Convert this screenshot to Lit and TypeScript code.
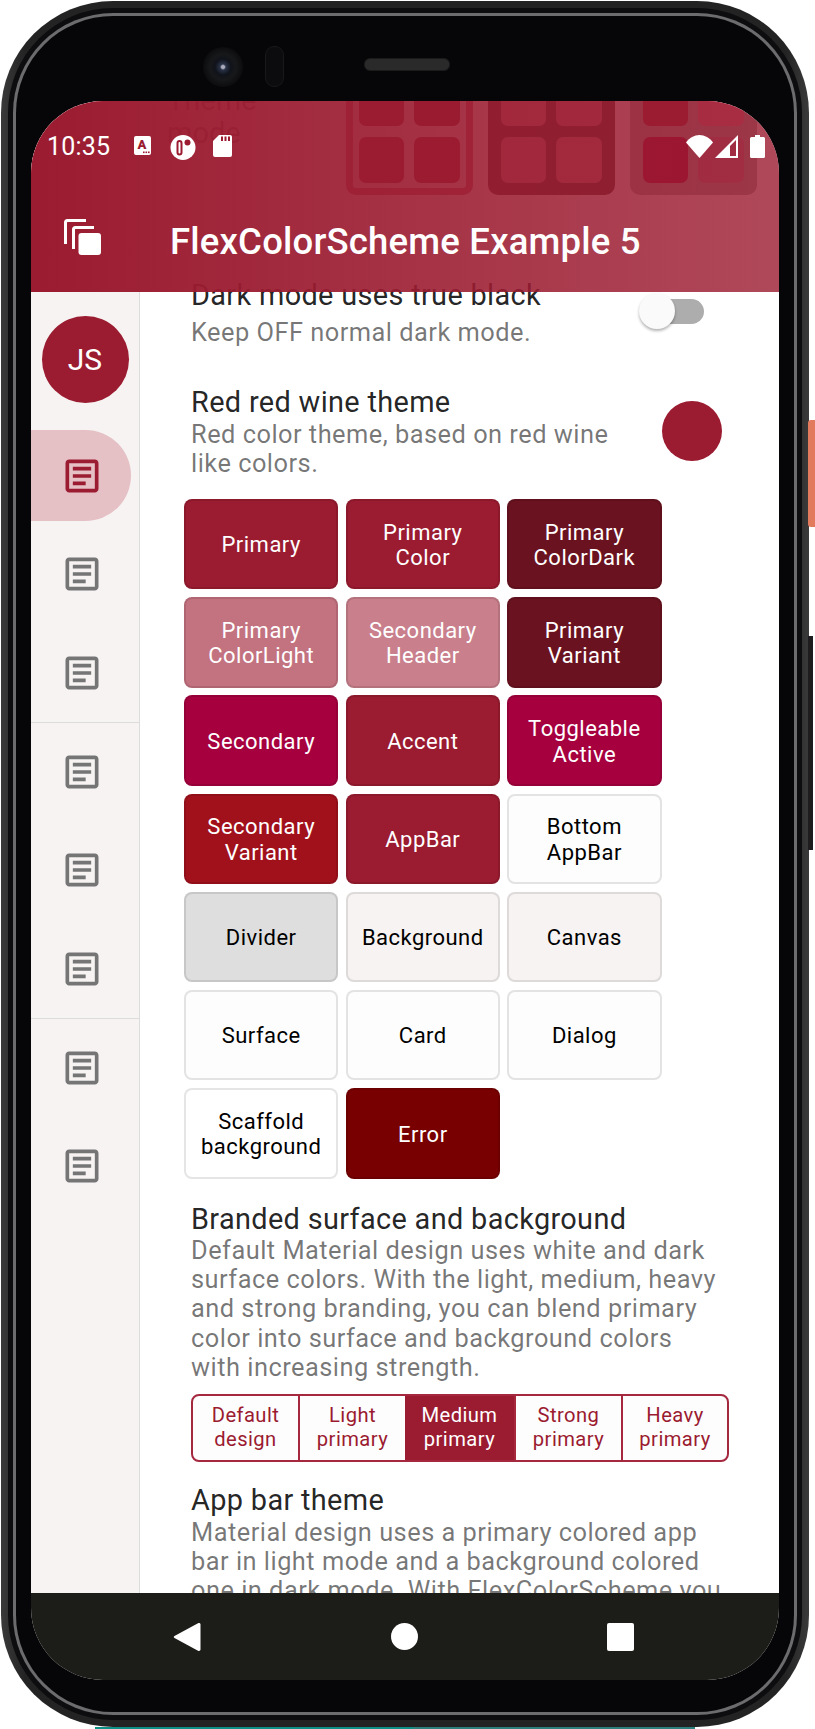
import { LitElement, html, css, svg } from "lit";
import { customElement } from "lit/decorators.js";

const PRIMARY = "#9b1b30";

const article = svg`<path d="M19 5v14H5V5h14m0-2H5c-1.1 0-2 .9-2 2v14c0 1.1.9 2 2 2h14c1.1 0 2-.9 2-2V5c0-1.1-.9-2-2-2z"/><path d="M14 17H7v-2h7v2zm3-4H7v-2h10v2zm0-4H7V7h10v2z"/>`;

type Swatch = { l: string[]; bg: string; fg: string };
const W = "#ffffff";
const K = "#000000";
const swatches: Swatch[] = [
  { l: ["Primary"], bg: PRIMARY, fg: W },
  { l: ["Primary", "Color"], bg: PRIMARY, fg: W },
  { l: ["Primary", "ColorDark"], bg: "#6b1220", fg: W },
  { l: ["Primary", "ColorLight"], bg: "#c3727f", fg: W },
  { l: ["Secondary", "Header"], bg: "#c97f8c", fg: W },
  { l: ["Primary", "Variant"], bg: "#6b1220", fg: W },
  { l: ["Secondary"], bg: "#a6003f", fg: W },
  { l: ["Accent"], bg: PRIMARY, fg: W },
  { l: ["Toggleable", "Active"], bg: "#a6003f", fg: W },
  { l: ["Secondary", "Variant"], bg: "#a1111c", fg: W },
  { l: ["AppBar"], bg: PRIMARY, fg: W },
  { l: ["Bottom", "AppBar"], bg: "#fdfdfd", fg: K },
  { l: ["Divider"], bg: "#dedede", fg: K },
  { l: ["Background"], bg: "#f6f3f2", fg: K },
  { l: ["Canvas"], bg: "#f6f3f2", fg: K },
  { l: ["Surface"], bg: "#fdfdfd", fg: K },
  { l: ["Card"], bg: "#fdfdfd", fg: K },
  { l: ["Dialog"], bg: "#fdfdfd", fg: K },
  { l: ["Scaffold", "background"], bg: "#ffffff", fg: K },
  { l: ["Error"], bg: "#790000", fg: W },
];

const segments = [
  ["Default", "design"],
  ["Light", "primary"],
  ["Medium", "primary"],
  ["Strong", "primary"],
  ["Heavy", "primary"],
];

const ghosts = [
  { cls: "g1", tiles: ["#9b1b30", "#8f1b2e", "#9b1a30", "#9f1a2e"] },
  { cls: "g2", tiles: ["#d4808f", "#c87588", "#cf808f", "#cf7a85"] },
  { cls: "g3", tiles: ["#9b1b30", "#e07b90", "#a0003c", "#bb7b90"] },
];

@customElement("app-root")
export class AppRoot extends LitElement {
  static styles = css`
    :host {
      display: block;
      position: relative;
      width: 815px;
      height: 1729px;
      overflow: hidden;
      background: #fff;
      font-family: Roboto, "Liberation Sans", sans-serif;
    }
    .shell {
      margin: 1px 0 0 1px;
      width: 808px;
      height: 1726px;
      box-sizing: border-box;
      padding: 7px;
      border-radius: 112px;
      background: linear-gradient(90deg, #3a3a3a, #232323 3%, #232323 97%, #3a3a3a);
    }
    .ring-dark {
      height: 100%;
      box-sizing: border-box;
      padding: 5px;
      border-radius: 105px;
      background: #0d0d0f;
    }
    .ring-light {
      height: 100%;
      box-sizing: border-box;
      padding: 3px;
      border-radius: 100px;
      background: #6c6c6e;
    }
    .bezel {
      height: 100%;
      box-sizing: border-box;
      padding: 85px 14px 0 15px;
      border-radius: 97px;
      background: #060608;
      position: relative;
    }
    .camera {
      position: absolute;
      left: 187px;
      top: 31px;
      width: 40px;
      height: 40px;
      border-radius: 50%;
      background: radial-gradient(circle at 50% 50%, #aab 0 1.5px, #2a3348 3px, #10131a 8px, #17181a 13px, #0c0c0e 20px);
    }
    .sensor {
      position: absolute;
      left: 249px;
      top: 30px;
      width: 17px;
      height: 39px;
      border-radius: 9px;
      background: #0c0c0e;
      border: 1px solid #17181a;
    }
    .speaker {
      position: absolute;
      left: 348px;
      top: 42px;
      width: 84px;
      height: 11px;
      border-radius: 6px;
      background: #2a2a2b;
      border: 1px solid #1a1a1b;
    }
    .teal {
      margin-left: 95px;
      width: 600px;
      height: 2px;
      background: linear-gradient(90deg, #0e8f85 0 53%, #2c7f7a 53%);
    }
    .btn-orange {
      position: absolute;
      left: 808px;
      top: 420px;
      width: 7px;
      height: 107px;
      border-radius: 3px 0 0 3px;
      background: #e27a5e;
    }
    .btn-dark {
      position: absolute;
      left: 808px;
      top: 636px;
      width: 5px;
      height: 214px;
      background: #1d1d1f;
    }

    .screen {
      position: relative;
      width: 748px;
      height: 1579px;
      overflow: hidden;
      border-radius: 72px;
      background: #fff;
    }
    .content {
      display: flex;
      height: 1492px;
      overflow: hidden;
    }

    /* rail */
    .rail {
      flex: none;
      width: 109px;
      box-sizing: border-box;
      padding-top: 215px;
      background: #f6f3f2;
      border-right: 1px solid #dcdcdc;
    }
    .avatar {
      width: 87px;
      height: 87px;
      margin: 0 auto 24px;
      border-radius: 50%;
      background: #9b1b30;
      color: #fff;
      font-size: 30px;
      display: flex;
      align-items: center;
      justify-content: center;
    }
    .dest {
      height: 98.3px;
      display: flex;
      align-items: center;
      justify-content: center;
      padding-right: 6px;
      fill: #757575;
      position: relative;
    }
    .dest svg {
      width: 44px;
      height: 44px;
      display: block;
      position: relative;
    }
    .dest.sel {
      fill: #9b1b30;
    }
    .dest.sel::before {
      content: "";
      position: absolute;
      left: 0;
      top: 3px;
      bottom: 4px;
      width: 100px;
      border-radius: 0 46px 46px 0;
      background: #e5c1c6;
    }
    .rail-div {
      height: 1px;
      background: #dcdcdc;
    }

    /* main */
    .main {
      flex: 1;
      min-width: 0;
      margin-top: -34px;
    }
    .ghost {
      display: flex;
      height: 128px;
    }
    .ghost-label {
      flex: none;
      width: 206px;
      box-sizing: border-box;
      padding: 17px 0 0 27px;
      font-size: 29px;
      line-height: 33px;
      color: rgba(0, 0, 0, 0.55);
    }
    .groups {
      display: flex;
      gap: 15px;
    }
    .group {
      width: 127px;
      height: 128px;
      box-sizing: border-box;
      padding: 13px 13px 0;
      border-radius: 10px;
      display: grid;
      grid-template-columns: 45px 46px;
      grid-auto-rows: 46px;
      column-gap: 10px;
      row-gap: 11px;
    }
    .g1 {
      background: #f4eaf0;
      box-shadow: inset 0 0 0 7px #c25a70;
    }
    .g2 {
      background: #473232;
    }
    .g3 {
      background: #a0abab;
    }
    .tile {
      border-radius: 7px;
    }
    .text {
      padding-left: 51px;
    }
    .title {
      font-size: 28.9px;
      line-height: 32px;
      letter-spacing: 0.34px;
      color: rgba(0, 0, 0, 0.87);
    }
    .sub {
      font-size: 25.4px;
      line-height: 29.2px;
      letter-spacing: 0.48px;
      color: rgba(0, 0, 0, 0.54);
    }
    .row {
      display: flex;
      align-items: center;
      position: relative;
    }
    .row .text {
      flex: 1;
    }
    .dark-row {
      margin-top: 84px;
      height: 71px;
      align-items: flex-start;
    }
    .dark-row .sub {
      margin-top: 7px;
    }
    .switch {
      position: absolute;
      left: 499px;
      top: 14px;
      width: 65px;
      height: 37px;
    }
    .track {
      position: absolute;
      left: 6px;
      right: 0;
      top: 6px;
      height: 25px;
      border-radius: 13px;
      background: #adadad;
    }
    .thumb {
      position: absolute;
      left: 0;
      top: 0;
      width: 36px;
      height: 36px;
      border-radius: 50%;
      background: #fafafa;
      box-shadow: 0 2px 3px rgba(0, 0, 0, 0.3);
    }
    .red-row {
      margin-top: 36px;
      height: 92px;
      align-items: flex-start;
    }
    .red-row .sub {
      margin-top: 1.5px;
    }
    .dot {
      position: absolute;
      left: 522px;
      top: 15px;
      width: 60px;
      height: 60px;
      border-radius: 50%;
      background: #9b1b30;
    }
    .grid {
      margin: 21px 0 0 44px;
      width: 479px;
      display: grid;
      grid-template-columns: repeat(3, 154.4px);
      grid-auto-rows: 90.4px;
      gap: 7.8px 7.2px;
    }
    .swatch {
      box-sizing: border-box;
      border: 2px solid rgba(0, 0, 0, 0.1);
      border-radius: 8px;
      padding-top: 2px;
      display: flex;
      align-items: center;
      justify-content: center;
      text-align: center;
      font-size: 22px;
      line-height: 25.4px;
      letter-spacing: 0.48px;
    }
    .branded {
      margin-top: 24px;
    }
    .branded .sub, .appbar-sec .sub {
      margin-top: 1.5px;
    }
    .seg {
      margin: 12px 0 0 51px;
      width: 538px;
      height: 68px;
      box-sizing: border-box;
      border: 2px solid #a5283e;
      border-radius: 8px;
      display: grid;
      grid-template-columns: 105px 107px 109px 107px 1fr;
      overflow: hidden;
      background: #fdfdfd;
    }
    .cell {
      display: flex;
      align-items: center;
      justify-content: center;
      text-align: center;
      font-size: 20.2px;
      line-height: 23.6px;
      letter-spacing: 0.42px;
      color: #9b1b30;
      border-left: 2px solid #a5283e;
    }
    .cell:first-child {
      border-left: none;
    }
    .cell.on {
      background: #9b1b30;
      color: #fff;
      border-left: none;
    }
    .appbar-sec {
      margin-top: 22px;
    }

    /* app bar over the content */
    .appbar {
      position: absolute;
      left: 0;
      top: 0;
      right: 0;
      height: 191px;
      background: linear-gradient(90deg, rgba(155, 27, 48, 1), rgba(155, 27, 48, 0.8));
      color: #fff;
    }
    .status {
      height: 89px;
      box-sizing: border-box;
      padding: 34px 14px 0 16px;
      display: flex;
      align-items: flex-start;
    }
    .time {
      font-size: 25px;
      line-height: 24px;
      width: 87px;
      letter-spacing: 0.2px;
    }
    .status svg {
      display: block;
      fill: #fff;
      flex: none;
    }
    .ic-a { margin: 1px 19px 0 0; }
    .ic-o { margin: 0 17px 0 0; }
    .ic-sd { margin: 0; }
    .spacer { flex: 1; }
    .ic-wifi { margin-right: 2px; }
    .ic-signal { margin-right: 12px; }
    .toolbar {
      height: 102px;
      display: flex;
      align-items: center;
      padding: 0 0 0 33px;
    }
    .toolbar svg {
      flex: none;
      display: block;
      margin: -8px 69px 0 0;
    }
    .appname {
      font-size: 36.5px;
      font-weight: 500;
      letter-spacing: 0.2px;
      white-space: nowrap;
    }

    /* system nav */
    .nav {
      position: absolute;
      left: 0;
      right: 0;
      bottom: 0;
      height: 87px;
      background: #1c1d18;
      display: flex;
      align-items: center;
      padding: 0 0 0 142px;
    }
    .nav svg {
      display: block;
      fill: #fff;
      flex: none;
    }
    .nav .back { margin-right: 190px; }
    .nav .home { margin-right: 189px; }
  `;

  render() {
    return html`
      <div class="shell">
        <div class="ring-dark">
          <div class="ring-light">
            <div class="bezel">
              <div class="camera"></div>
              <div class="sensor"></div>
              <div class="speaker"></div>
              <div class="screen">
                <div class="content">
                  ${this.rail()}
                  ${this.main()}
                </div>
                ${this.appBar()}
                <div class="nav">
                  <svg class="back" width="28" height="30" viewBox="0 0 28 30"><path d="M25 1.2 1.5 14a1.2 1.2 0 0 0 0 2L25 28.8c1.2.6 2.5 0 2.5-1.2V2.4C27.500 1.200 26.200.6 25 1.200z"/></svg>
                  <svg class="home" width="27" height="27" viewBox="0 0 27 27"><circle cx="13.500" cy="13.500" r="13.500"/></svg>
                  <svg width="27" height="28" viewBox="0 0 27 28"><rect width="27" height="28" rx="2"/></svg>
                </div>
              </div>
            </div>
          </div>
        </div>
      </div>
      <div class="teal"></div>
      <div class="btn-orange"></div>
      <div class="btn-dark"></div>
    `;
  }

  private rail() {
    const icon = html`<svg viewBox="0 0 24 24">${article}</svg>`;
    const d = (sel = false) => html`<div class="dest ${sel ? "sel" : ""}">${icon}</div>`;
    return html`
      <div class="rail">
        <div class="avatar">JS</div>
        ${d(true)}${d()}${d()}
        <div class="rail-div"></div>
        ${d()}${d()}${d()}
        <div class="rail-div"></div>
        ${d()}${d()}
      </div>
    `;
  }

  private main() {
    return html`
      <div class="main">
        <div class="ghost">
          <div class="ghost-label">Theme<br />mode</div>
          <div class="groups">
            ${ghosts.map(
              (g) => html`<div class="group ${g.cls}">
                ${g.tiles.map((t) => html`<div class="tile" style="background:${t}"></div>`)}
              </div>`
            )}
          </div>
        </div>
        <div class="row dark-row">
          <div class="text">
            <div class="title">Dark mode uses true black</div>
            <div class="sub">Keep OFF normal dark mode.</div>
          </div>
          <div class="switch"><div class="track"></div><div class="thumb"></div></div>
        </div>
        <div class="row red-row">
          <div class="text">
            <div class="title">Red red wine theme</div>
            <div class="sub">Red color theme, based on red wine<br />like colors.</div>
          </div>
          <div class="dot"></div>
        </div>
        <div class="grid">
          ${swatches.map(
            (s) => html`<div class="swatch" style="background-color:${s.bg};color:${s.fg}">
              <div>${s.l.map((t, i) => html`${i ? html`<br />` : ""}${t}`)}</div>
            </div>`
          )}
        </div>
        <div class="text branded">
          <div class="title">Branded surface and background</div>
          <div class="sub">
            Default Material design uses white and dark<br />
            surface colors. With the light, medium, heavy<br />
            and strong branding, you can blend primary<br />
            color into surface and background colors<br />
            with increasing strength.
          </div>
        </div>
        <div class="seg">
          ${segments.map(
            (s, i) => html`<div class="cell ${i === 2 ? "on" : ""}"><div>${s[0]}<br />${s[1]}</div></div>`
          )}
        </div>
        <div class="text appbar-sec">
          <div class="title">App bar theme</div>
          <div class="sub">
            Material design uses a primary colored app<br />
            bar in light mode and a background colored<br />
            one in dark mode. With FlexColorScheme you
          </div>
        </div>
      </div>
    `;
  }

  private appBar() {
    return html`
      <div class="appbar">
        <div class="status">
          <div class="time">10:35</div>
          <svg class="ic-a" width="17" height="19" viewBox="0 0 17 19">
            <rect width="17" height="19" rx="2" />
            <text x="8" y="13" font-size="13" font-weight="900" font-family="Roboto" text-anchor="middle" fill="#9b1b30">A</text>
            <rect x="9" y="15.500" width="1.600" height="1.600" fill="#9b1b30" />
            <rect x="11.500" y="15.500" width="1.600" height="1.600" fill="#9b1b30" />
            <rect x="14" y="15.500" width="1.600" height="1.600" fill="#9b1b30" />
          </svg>
          <svg class="ic-o" width="26" height="25" viewBox="0 0 26 25">
            <circle cx="13" cy="12.500" r="12.500" />
            <rect x="7.500" y="6" width="4" height="13.500" rx="2" fill="none" stroke="#9b1b30" stroke-width="2" />
            <circle cx="17.500" cy="7.500" r="3" fill="#9b1b30" />
          </svg>
          <svg class="ic-sd" width="19" height="22" viewBox="0 0 19 22">
            <path d="M6 0h11a2 2 0 0 1 2 2v18a2 2 0 0 1-2 2H2a2 2 0 0 1-2-2V6z" />
            <rect x="8" y="1.500" width="2" height="4.500" fill="#9b1b30" />
            <rect x="11.500" y="1.500" width="2" height="4.500" fill="#9b1b30" />
            <rect x="15" y="1.500" width="2" height="4.500" fill="#9b1b30" />
          </svg>
          <div class="spacer"></div>
          <svg class="ic-wifi" width="27" height="23" viewBox="0 0 27 23"><path d="M13.500 23 0 7.500C3.500 2.800 8.300 0 13.500 0S23.500 2.800 27 7.500z" /></svg>
          <svg class="ic-signal" width="23" height="23" viewBox="0 0 23 23"><path fill-rule="evenodd" d="M23 0v23H0zM21 5 15 11v10h6z" /></svg>
          <svg width="15" height="23" viewBox="0 0 15 23"><path d="M5 0h5v2h3.500A1.500 1.500 0 0 1 15 3.500V21.500A1.500 1.500 0 0 1 13.500 23H1.500A1.500 1.500 0 0 1 0 21.500V3.500A1.500 1.500 0 0 1 1.500 2H5z" /></svg>
        </div>
        <div class="toolbar">
          <svg width="37" height="36" viewBox="0 0 37 36" fill="#fff">
            <path d="M1.500 25V3.500Q1.500 1.500 3.500 1.500H22" fill="none" stroke="#fff" stroke-width="3" />
            <path d="M9.500 30V10.500Q9.500 8.500 11.500 8.500H30" fill="none" stroke="#fff" stroke-width="3" />
            <rect x="14.500" y="14" width="22.500" height="22" rx="3" />
          </svg>
          <div class="appname">FlexColorScheme Example 5</div>
        </div>
      </div>
    `;
  }
}
